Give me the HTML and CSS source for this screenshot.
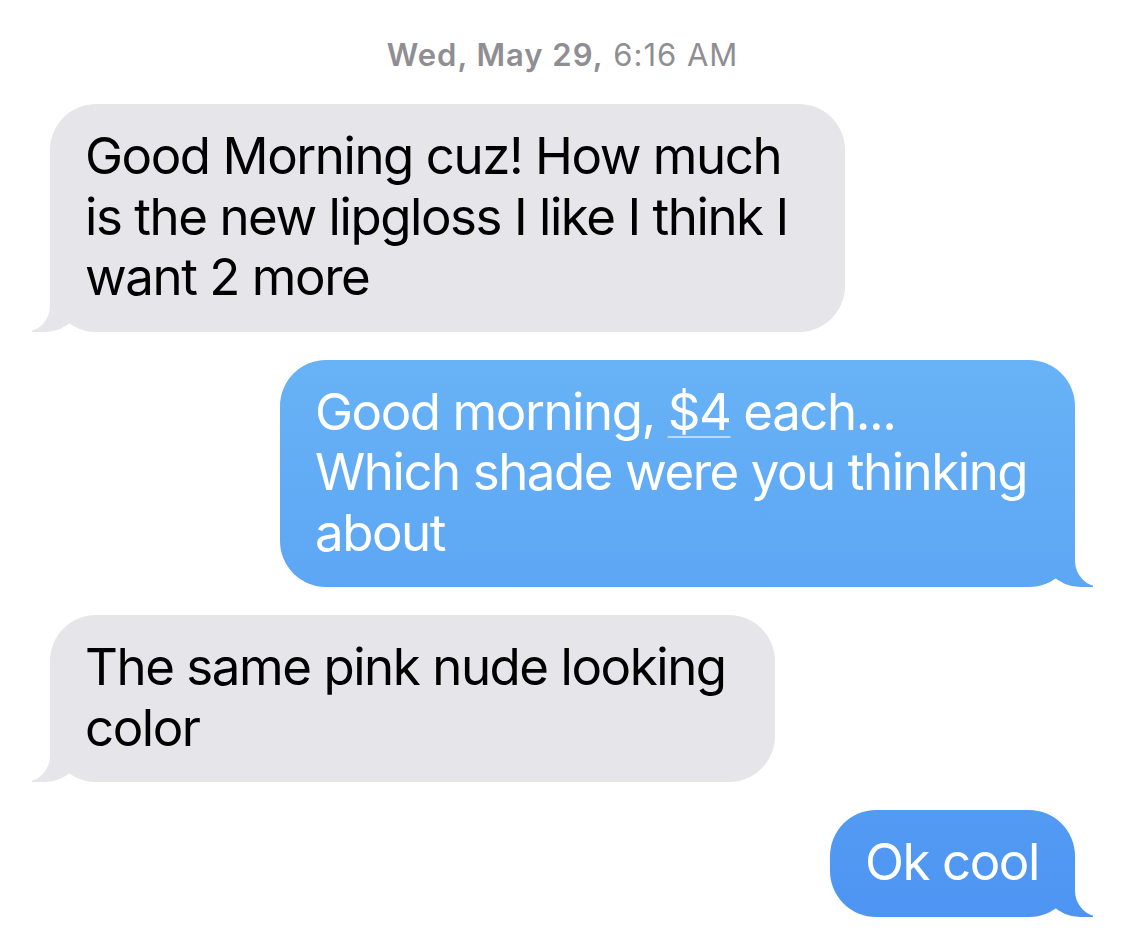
FILE: index.html
```html
<!DOCTYPE html>
<html lang="en">
<head>
    <meta charset="UTF-8">
    <meta name="viewport" content="width=device-width, initial-scale=1.0">
    <title>Messages</title>
    <link rel="stylesheet" href="styles.css">
</head>
<body>

    <main class="thread">
        <p class="stamp"><b>Wed, May 29,</b> 6:16 AM</p>

        <div class="msg them w-wide">Good Morning cuz! How much<br>is the new lipgloss I like I think I<br>want 2 more</div>

        <div class="msg me w-wide">Good morning, <span class="detected">$4</span> each...<br>Which shade were you thinking<br>about</div>

        <div class="msg them w-mid">The same pink nude looking<br>color</div>

        <div class="msg me w-short">Ok cool</div>
    </main>

</body>
</html>
```

FILE: styles.css
```css
html, body { margin: 0; background: #fff; }
body { font-family: Inter, "Noto Sans", sans-serif; -webkit-font-smoothing: antialiased; }

.thread { display: flex; flex-direction: column; gap: 28px; padding: 37px 50px 0; }

.stamp { margin: 0 0 3px; text-align: center; font-size: 31px; line-height: 36px; letter-spacing: 1px; color: #8e8e93; }
.stamp b { font-weight: 600; }

.msg { position: relative; z-index: 0; box-sizing: border-box; padding: 22px 30px 24px 35px; border-radius: 46px; font-size: 51px; line-height: 60.5px; letter-spacing: -1.45px; white-space: nowrap; }
.msg::before, .msg::after { content: ""; position: absolute; bottom: 0; z-index: -1; height: 52px; }

.them { align-self: flex-start; background: #e5e5ea; color: #000; }
.them::before { left: -18px; width: 52px; background: #e5e5ea; border-bottom-right-radius: 39px; }
.them::after { left: -50px; width: 50px; background: #fff; border-bottom-right-radius: 26px; }

.me { align-self: flex-end; color: #fff; background: linear-gradient(#68b2f6 360px, #4d95f2 917px) fixed; }
.me::before { right: -18px; width: 52px; background: linear-gradient(#68b2f6 360px, #4d95f2 917px) fixed; border-bottom-left-radius: 39px; }
.me::after { right: -50px; width: 50px; background: #fff; border-bottom-left-radius: 26px; }

.w-wide { width: 795px; }
.w-mid { width: 725px; }
.w-short { width: 245px; }

.detected { text-decoration: underline; text-decoration-color: rgba(255, 255, 255, 0.55); text-decoration-thickness: 2px; text-underline-offset: 6px; }
```
